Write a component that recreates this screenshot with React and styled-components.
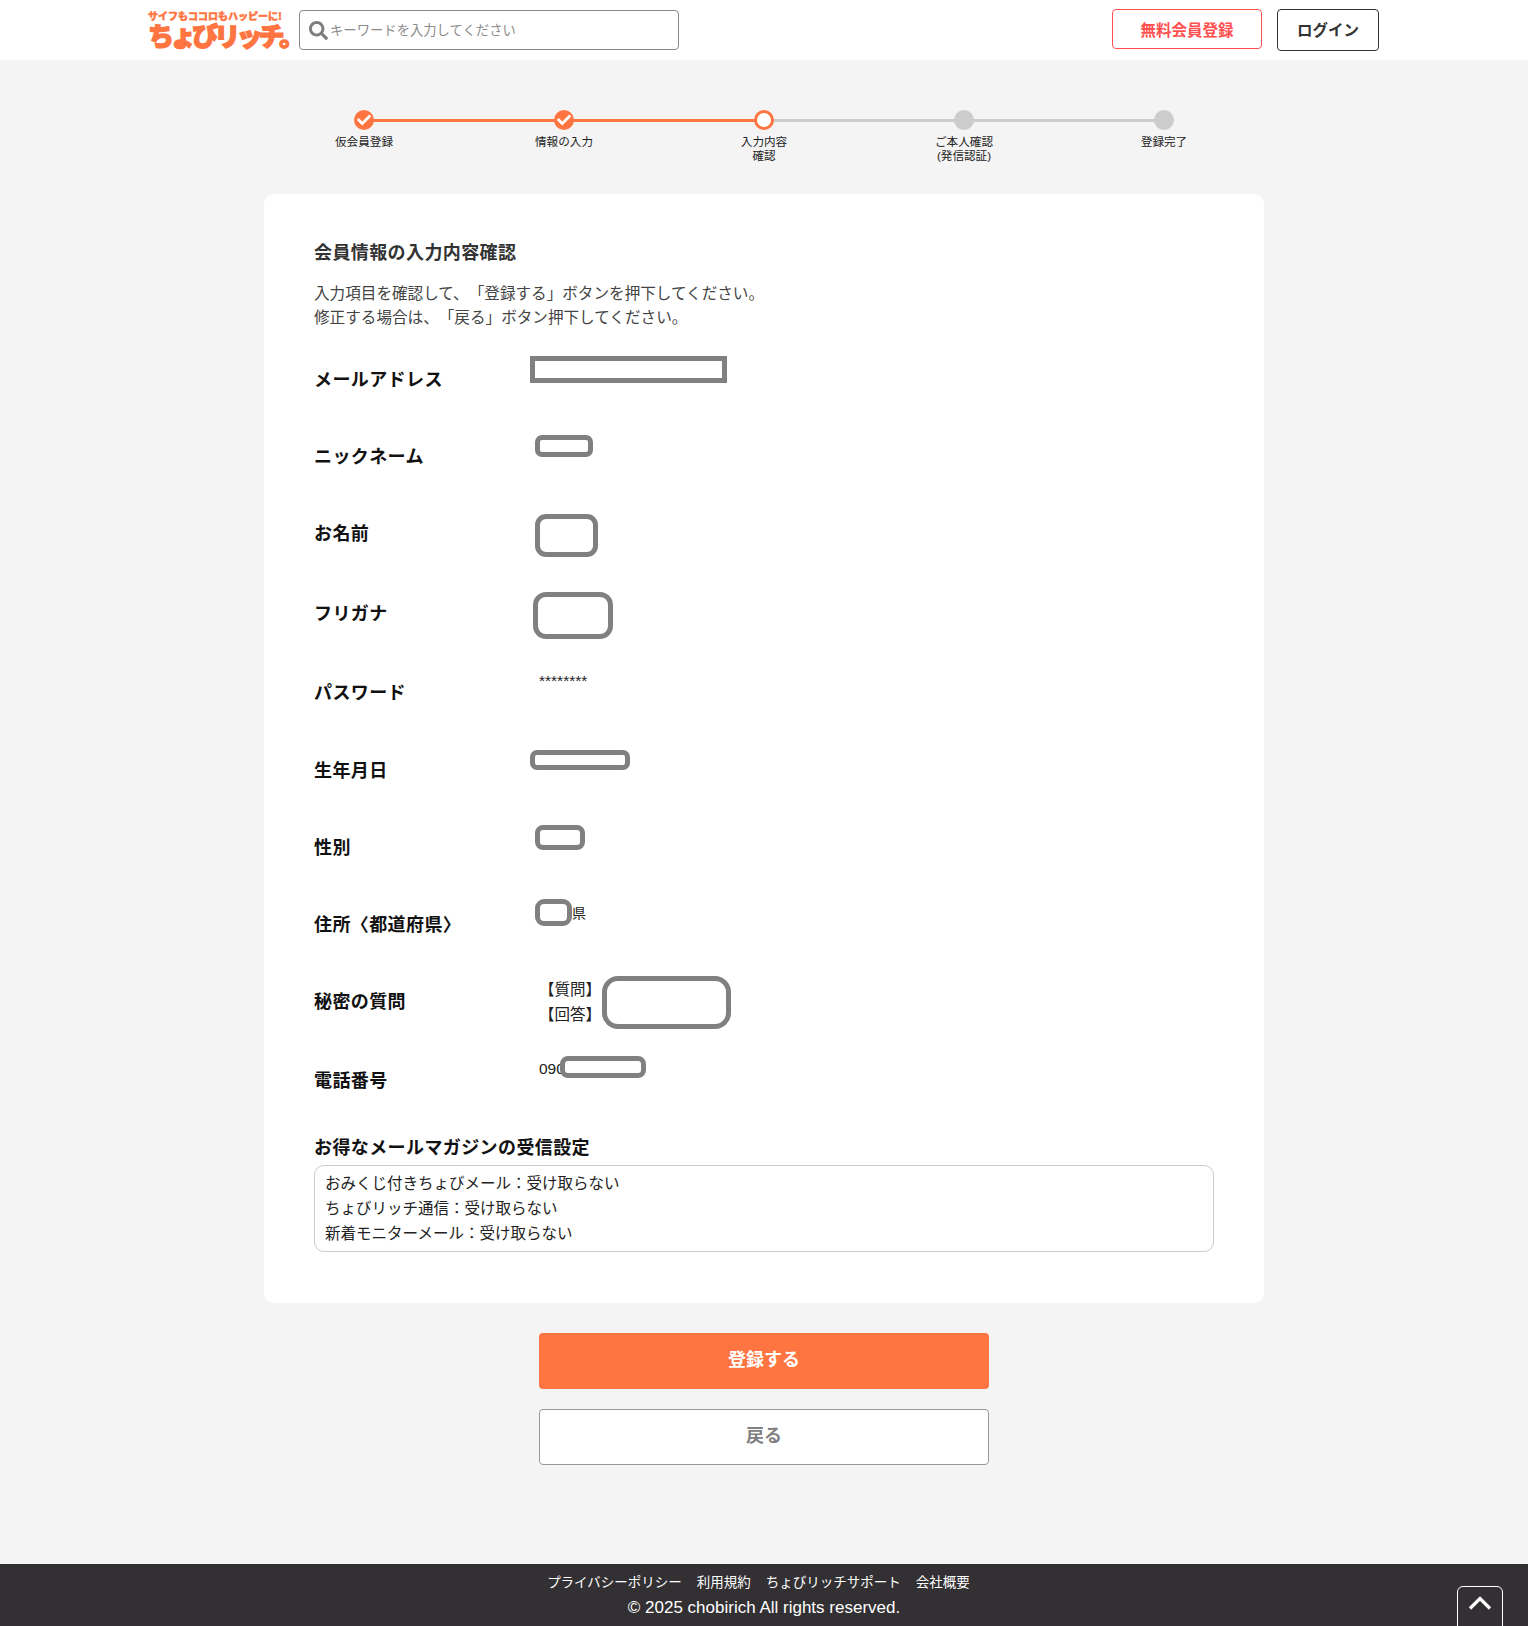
import React from "react";
import styled, { createGlobalStyle } from "styled-components";
import { FaSearch, FaCheck } from "react-icons/fa";

const GlobalStyle = createGlobalStyle`
  * {
    box-sizing: border-box;
  }
  body {
    margin: 0;
    background: #f4f4f4;
    color: #333;
    font-family: "Liberation Sans", "Noto Sans CJK JP", sans-serif;
    text-spacing-trim: space-all;
  }
`;

const steps = [
  { label: ["仮会員登録"], state: "done" },
  { label: ["情報の入力"], state: "done" },
  { label: ["入力内容", "確認"], state: "current" },
  { label: ["ご本人確認", "(発信認証)"], state: "todo" },
  { label: ["登録完了"], state: "todo" },
];

const rows = [
  { label: "メールアドレス", h: 77, marks: [{ x: -9, y: -2, w: 197, h: 27, r: 0 }] },
  { label: "ニックネーム", h: 77, marks: [{ x: -4, y: 0, w: 58, h: 22, r: 7 }] },
  { label: "お名前", h: 80, marks: [{ x: -4, y: 2, w: 63, h: 43, r: 11 }] },
  { label: "フリガナ", h: 79, marks: [{ x: -6, y: 0, w: 80, h: 47, r: 13 }] },
  { label: "パスワード", h: 78, value: "********", marks: [] },
  { label: "生年月日", h: 77, marks: [{ x: -9, y: 1, w: 100, h: 20, r: 7 }] },
  { label: "性別", h: 77, marks: [{ x: -4, y: -1, w: 50, h: 25, r: 8 }] },
  { label: "住所〈都道府県〉", h: 77, suffix: "県", marks: [{ x: -4, y: -4, w: 37, h: 27, r: 9 }] },
  {
    label: "秘密の質問",
    h: 79,
    lines: ["【質問】", "【回答】"],
    marks: [{ x: 63, y: -4, w: 129, h: 53, r: 16 }],
  },
  { label: "電話番号", h: 77, value: "090", marks: [{ x: 21, y: -3, w: 86, h: 22, r: 8 }] },
];

const App = () => {
  return (
    <Page>
      <GlobalStyle />
      <Header>
        <Logo>
          <Tagline>サイフもココロもハッピーに!</Tagline>
          <LogoName>ちょびリッチ。</LogoName>
        </Logo>
        <SearchBox>
          <SearchIcon />
          <SearchInput placeholder="キーワードを入力してください" />
        </SearchBox>
        <HeaderActions>
          <SignupButton>無料会員登録</SignupButton>
          <LoginButton>ログイン</LoginButton>
        </HeaderActions>
      </Header>

      <Main>
        <Stepper>
          {steps.map((step, i) => (
            <Step key={step.label[0]}>
              {i < steps.length - 1 && <StepLine $on={step.state === "done"} />}
              <StepDot $state={step.state}>
                {step.state === "done" && <FaCheck />}
              </StepDot>
              <StepLabel>
                {step.label.map((line) => (
                  <div key={line}>{line}</div>
                ))}
              </StepLabel>
            </Step>
          ))}
        </Stepper>

        <Card>
          <CardTitle>会員情報の入力内容確認</CardTitle>
          <Lead>
            入力項目を確認して、「登録する」ボタンを押下してください。
            <br />
            修正する場合は、「戻る」ボタン押下してください。
          </Lead>

          <InfoList>
            {rows.map((row) => (
              <InfoRow key={row.label} $h={row.h}>
                <InfoLabel>{row.label}</InfoLabel>
                <InfoValue>
                  {row.value}
                  {row.suffix && <ValueSuffix>{row.suffix}</ValueSuffix>}
                  {row.lines && row.lines.map((line) => <QaLine key={line}>{line}</QaLine>)}
                  {row.marks.map((m) => (
                    <Redact key={m.x} $x={m.x} $y={m.y} $w={m.w} $h={m.h} $r={m.r} />
                  ))}
                </InfoValue>
              </InfoRow>
            ))}
          </InfoList>

          <MailTitle>お得なメールマガジンの受信設定</MailTitle>
          <MailBox>
            <div>おみくじ付きちょびメール：受け取らない</div>
            <div>ちょびリッチ通信：受け取らない</div>
            <div>新着モニターメール：受け取らない</div>
          </MailBox>
        </Card>

        <SubmitButton>登録する</SubmitButton>
        <BackButton>戻る</BackButton>
      </Main>

      <Footer>
        <FooterLinks>
          <FooterLink>プライバシーポリシー</FooterLink>
          <FooterLink>利用規約</FooterLink>
          <FooterLink>ちょびリッチサポート</FooterLink>
          <FooterLink>会社概要</FooterLink>
        </FooterLinks>
        <Copyright>© 2025 chobirich All rights reserved.</Copyright>
        <PageTop aria-label="ページトップへ">
          <svg width="24" height="14" viewBox="0 0 24 14" fill="none">
            <path d="M2 12.5 L12 2.5 L22 12.5" stroke="#fff" strokeWidth="3.2" />
          </svg>
        </PageTop>
      </Footer>
    </Page>
  );
};

export default App;

const Page = styled.div`
  min-height: 100vh;
  display: flex;
  flex-direction: column;
  overflow: hidden;
`;

const Header = styled.header`
  height: 60px;
  background: #fff;
  display: flex;
  align-items: center;
  padding: 0 149px 0 148px;
`;

const Logo = styled.div`
  width: 142px;
  margin: -4px 9px 0 0;
  color: #ff7541;
  font-family: "Noto Sans CJK JP", sans-serif;
  font-weight: 900;
  white-space: nowrap;
`;

const Tagline = styled.div`
  font-size: 10px;
  line-height: 11px;
  -webkit-text-stroke: 0.4px #ff7541;
`;

const LogoName = styled.div`
  margin-top: 1px;
  font-size: 26px;
  line-height: 25px;
  letter-spacing: -3.9px;
  -webkit-text-stroke: 1.4px #ff7541;
`;

const SearchBox = styled.div`
  width: 380px;
  height: 40px;
  border: 1px solid #888;
  border-radius: 4px;
  display: flex;
  align-items: center;
  padding-left: 9px;
  background: #fff;
`;

const SearchIcon = styled(FaSearch)`
  width: 19px;
  height: 19px;
  color: #7d7d80;
  flex: none;
`;

const SearchInput = styled.input`
  flex: 1;
  min-width: 0;
  border: 0;
  outline: 0;
  padding: 0 0 0 2px;
  background: transparent;
  font-family: inherit;
  font-size: 13.33px;

  &::placeholder {
    color: #8c8c8c;
    opacity: 1;
  }
`;

const HeaderActions = styled.div`
  margin-left: auto;
  display: flex;
  align-items: flex-start;
  gap: 15px;
`;

const SignupButton = styled.button`
  width: 150px;
  height: 40px;
  border: 1px solid #ff5050;
  border-radius: 4px;
  background: #fff;
  color: #ff5050;
  font-family: inherit;
  font-size: 15.5px;
  font-weight: 700;
`;

const LoginButton = styled.button`
  width: 102px;
  height: 42px;
  padding: 0 0 2px;
  border: 1px solid #333;
  border-radius: 4px;
  background: #fff;
  color: #333;
  font-family: inherit;
  font-size: 15.5px;
  font-weight: 700;
`;

const Main = styled.main`
  flex: 1;
  display: flex;
  flex-direction: column;
  align-items: center;
  padding: 50px 0 99px;
`;

const Stepper = styled.div`
  width: 1000px;
  height: 84px;
  display: flex;
`;

const Step = styled.div`
  position: relative;
  width: 200px;
  display: flex;
  flex-direction: column;
  align-items: center;
`;

const StepLine = styled.div`
  position: absolute;
  top: 9px;
  left: 100px;
  width: 200px;
  height: 3px;
  background: ${(p) => (p.$on ? "#ff7541" : "#ccc")};
`;

const StepDot = styled.div`
  position: relative;
  width: 20px;
  height: 20px;
  border-radius: 50%;
  display: flex;
  align-items: center;
  justify-content: center;
  color: #fff;
  font-size: 14px;
  background: ${(p) =>
    p.$state === "done" ? "#ff7541" : p.$state === "current" ? "#fff" : "#ccc"};
  border: ${(p) => (p.$state === "current" ? "3px solid #ff7541" : "0")};
`;

const StepLabel = styled.div`
  margin-top: 5px;
  font-size: 11.6px;
  line-height: 14px;
  color: #222;
  text-align: center;
`;

const Card = styled.section`
  width: 1000px;
  height: 1109px;
  background: #fff;
  border-radius: 10px;
  padding: 47px 50px 0;
`;

const CardTitle = styled.h2`
  margin: 0;
  font-size: 18px;
  line-height: 24px;
  letter-spacing: 0.4px;
  font-weight: 700;
  color: #333;
`;

const Lead = styled.p`
  margin: 17px 0 0;
  font-size: 15.6px;
  line-height: 24px;
  color: #444;
`;

const InfoList = styled.div`
  margin-top: 28px;
`;

const InfoRow = styled.div`
  height: ${(p) => p.$h}px;
  display: grid;
  grid-template-columns: 225px 1fr;
`;

const InfoLabel = styled.div`
  padding-top: 9px;
  font-size: 18px;
  line-height: 26px;
  letter-spacing: 0.4px;
  font-weight: 700;
  color: #111;
`;

const InfoValue = styled.div`
  position: relative;
  font-size: 15.5px;
  line-height: 19px;
  color: #222;
  white-space: pre;
`;

const ValueSuffix = styled.span`
  margin-left: 33px;
  font-size: 14px;
`;

const QaLine = styled.div`
  line-height: 25px;

  &:first-child {
    margin-top: -3px;
  }
`;

const Redact = styled.div`
  position: absolute;
  left: ${(p) => p.$x}px;
  top: ${(p) => p.$y}px;
  width: ${(p) => p.$w}px;
  height: ${(p) => p.$h}px;
  border: 5px solid #808080;
  border-radius: ${(p) => p.$r}px;
  background: #fff;
`;

const MailTitle = styled.h3`
  margin: 0;
  font-size: 18px;
  line-height: 24px;
  letter-spacing: 0.4px;
  font-weight: 700;
  color: #111;
`;

const MailBox = styled.div`
  margin-top: 5px;
  height: 87px;
  border: 1px solid #ccc;
  border-radius: 10px;
  padding: 5px 10px;
  font-size: 15.5px;
  line-height: 25px;
  color: #222;
`;

const SubmitButton = styled.button`
  width: 450px;
  height: 56px;
  margin-top: 30px;
  padding: 0 0 6px;
  border: 0;
  border-radius: 4px;
  background: #ff7541;
  color: #fff;
  font-family: inherit;
  font-size: 18px;
  font-weight: 700;
`;

const BackButton = styled.button`
  width: 450px;
  height: 56px;
  margin-top: 20px;
  padding: 0 0 6px;
  border: 1px solid #999;
  border-radius: 4px;
  background: #fff;
  color: #808080;
  font-family: inherit;
  font-size: 18px;
  font-weight: 700;
`;

const Footer = styled.footer`
  position: relative;
  height: 62px;
  background: #333033;
  color: #fff;
  overflow: hidden;
  text-align: center;
`;

const FooterLinks = styled.div`
  display: flex;
  justify-content: center;
  gap: 15px;
  padding: 9px 11px 0 0;
  font-size: 13.5px;
  line-height: 20px;
`;

const FooterLink = styled.span`
  color: #fff;
`;

const Copyright = styled.div`
  margin-top: 5px;
  font-size: 17px;
  line-height: 20px;
`;

const PageTop = styled.button`
  position: absolute;
  top: 22px;
  right: 25px;
  width: 46px;
  height: 60px;
  padding: 9px 0 0;
  border: 1px solid #fff;
  border-radius: 6px;
  background: #333033;
  display: flex;
  justify-content: center;
  align-items: flex-start;
`;
